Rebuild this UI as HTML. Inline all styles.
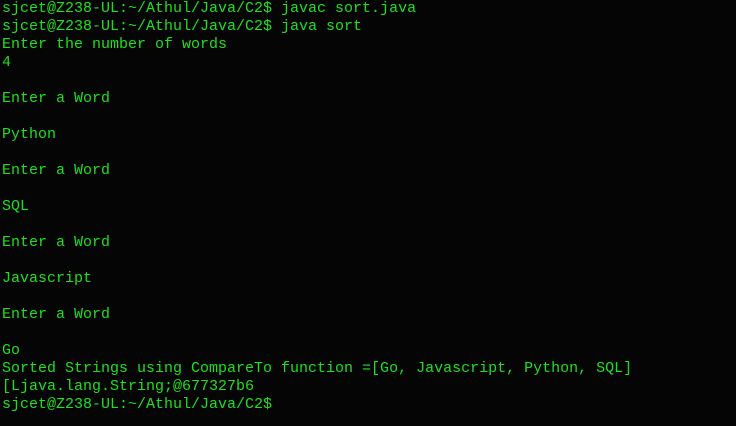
<!DOCTYPE html>
<html><head><meta charset="utf-8"><style>
html,body{margin:0;padding:0;background:#050505;width:736px;height:426px;overflow:hidden}
pre{margin:0;padding:0 0 0 2px;font-family:"Liberation Mono","DejaVu Sans Mono",monospace;font-size:15px;line-height:18px;color:#1fe01f;position:relative;top:0}
</style></head><body><pre>sjcet@Z238-UL:~/Athul/Java/C2$ javac sort.java
sjcet@Z238-UL:~/Athul/Java/C2$ java sort
Enter the number of words
4

Enter a Word

Python

Enter a Word

SQL

Enter a Word

Javascript

Enter a Word

Go
Sorted Strings using CompareTo function =[Go, Javascript, Python, SQL]
[Ljava.lang.String;@677327b6
sjcet@Z238-UL:~/Athul/Java/C2$ </pre></body></html>
